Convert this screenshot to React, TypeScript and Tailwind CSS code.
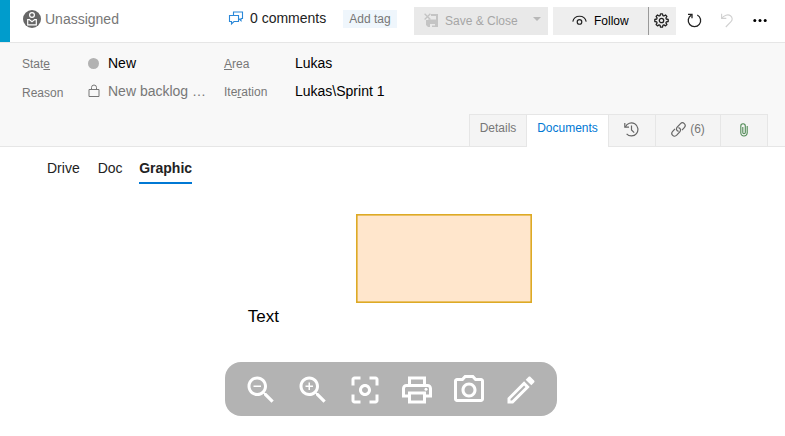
import type { ReactNode } from "react";

function PersonIcon() {
  return (
    <svg className="h-[18px] w-[18px] shrink-0" viewBox="0 0 18 18" fill="none">
      <circle cx="9" cy="9" r="9" fill="#666" />
      <circle cx="9" cy="5" r="2.4" stroke="#fff" strokeWidth="1.2" />
      <path d="M4.7 9.6h1.6L9 11.7l2.7-2.1h1.6v5.2H4.7z" stroke="#fff" strokeWidth="1.2" />
    </svg>
  );
}

function CommentsIcon() {
  return (
    <svg className="h-[15px] w-[16px] shrink-0" viewBox="0 0 16 15" fill="none" stroke="#2b88d8" strokeWidth="1.1">
      <path d="M5.500 4V1h9v6.500H13v2.300l-2.200-2.100" />
      <path d="M1.500 4.500h9v6H6l-2.500 2.400v-2.400h-2z" />
    </svg>
  );
}

function SaveCloseIcon() {
  return (
    <svg className="h-[15px] w-[15px] shrink-0" viewBox="0 0 15 15" fill="none">
      <path d="M7 1h7v13H4l-2-2V7h2v1h8V3H7z" fill="#c4c4c4" />
      <path d="M12 8H4V6.500h8z" fill="#c4c4c4" />
      <path d="M6 11h5v1.500H8V14H6z" fill="#e9e9e9" />
      <path d="M.6.7l5.800 5.800M6.400.7L.6 6.500" stroke="#c4c4c4" strokeWidth="1.300" />
    </svg>
  );
}

function EyeIcon() {
  return (
    <svg className="h-[11px] w-[15px] shrink-0" viewBox="0 0 15 11" fill="none" stroke="#222" strokeWidth="1.15">
      <path d="M.8 6.600C1.500 3.300 4.200 1.200 7.500 1.200s6 2.100 6.700 5.400" />
      <circle cx="7.500" cy="6.900" r="2.300" />
    </svg>
  );
}

function GearIcon() {
  return (
    <svg className="h-[15px] w-[15px]" viewBox="0 0 15 15" fill="none" stroke="#222" strokeWidth="1.3" strokeLinejoin="round">
      <path d="M6.500.8h2l.4 1.800 1 .4 1.600-1 1.400 1.400-1 1.600.4 1 1.900.5v2l-1.900.4-.4 1 1 1.600-1.400 1.400-1.600-1-1 .4-.4 1.900h-2l-.4-1.900-1-.4-1.600 1-1.400-1.400 1-1.600-.4-1-1.900-.4v-2L2.700 6l.4-1-1-1.600L3.500 2l1.600 1 1-.4z" />
      <circle cx="7.500" cy="7.500" r="2.200" />
    </svg>
  );
}

function RefreshIcon() {
  return (
    <svg className="h-[15px] w-[15px]" viewBox="0 0 15 15" fill="none" stroke="#222" strokeWidth="1.300">
      <path d="M10.300 2A6.200 6.200 0 1 1 4.400 2.100" />
      <path d="M1 1.300h4v4" />
    </svg>
  );
}

function UndoIcon() {
  return (
    <svg className="h-[15px] w-[14px]" viewBox="0 0 14 15" fill="none" stroke="#d0d0d0" strokeWidth="1.1">
      <path d="M1.600.8v4.600h4.700" />
      <path d="M1.800 5.200C4 2.300 8 .9 10.500 2.800c2.100 1.600 2.200 4.100.5 5.900L5.800 14" />
    </svg>
  );
}

function LockIcon() {
  return (
    <svg className="h-[14px] w-[12px] shrink-0" viewBox="0 0 12 14" fill="none" stroke="#777">
      <path d="M1 5.500h10v7H1z" />
      <path d="M3.500 5.500V3.500a2.500 2.500 0 0 1 5 0v2" />
    </svg>
  );
}

function HistoryIcon() {
  return (
    <svg className="h-[15px] w-[15px]" viewBox="0 0 15 15" fill="none" stroke="#666" strokeWidth="1.2">
      <path d="M1.400 5A6.500 6.500 0 1 1 2.600 11.800" />
      <path d="M.8 1v4.200h4.200M7.500 3.500v4.500l2.700 2.600" />
    </svg>
  );
}

function LinkIcon() {
  return (
    <svg className="h-[15px] w-[15px] shrink-0" viewBox="0 0 15 15" fill="none" stroke="#666" strokeWidth="1.2">
      <path d="M7.600 9.400C5.500 8.900 4.800 6.800 6.200 5.200l3.100-3.400c1.200-1.200 2.900-1.300 4-.2 1.200 1.200 1.100 2.900 0 4.100L11 8.200" />
      <path d="M7.400 5.600c2.100.5 2.800 2.600 1.400 4.200L5.700 13.200c-1.200 1.200-2.900 1.300-4 .2-1.200-1.200-1.100-2.900 0-4.100L4 6.800" />
    </svg>
  );
}

function ClipIcon() {
  return (
    <svg className="h-[14px] w-[8px]" viewBox="0 0 8 14" fill="none" strokeWidth="1.1">
      <path d="M7.200 3v6.800a3.200 3.200 0 0 1-6.400 0V3A2.200 2.200 0 0 1 5.300 3v6.500a1.200 1.200 0 0 1-2.500 0V4" stroke="#4f8a54" />
    </svg>
  );
}

function Tool({ children }: { children: ReactNode }) {
  return (
    <svg className="h-9 w-9" viewBox="0 0 24 24" fill="#fff">
      {children}
    </svg>
  );
}

const lens =
  "M15.500 14h-.79l-.28-.27C15.410 12.590 16 11.110 16 9.500 16 5.910 13.090 3 9.500 3S3 5.910 3 9.500 5.910 16 9.500 16c1.610 0 3.090-.59 4.230-1.570l.27.28v.79l5 4.990L20.490 19l-4.990-5zm-6 0C7.010 14 5 11.990 5 9.500S7.010 5 9.500 5 14 7.010 14 9.500 11.990 14 9.500 14z";

export default function App() {
  return (
    <div className="flex h-[436px] w-[785px] flex-col overflow-hidden bg-white font-['Liberation_Sans',Arial,sans-serif] text-sm text-[#222]">
      <header className="flex h-[43px] shrink-0 border-b border-[#e6e6e6]">
        <div className="h-[42px] w-2.5 bg-[#009ccc]" />
        <div className="ml-[13px] flex h-[38px] w-[205px] items-center gap-1 text-[#777]">
          <PersonIcon />
          <span>Unassigned</span>
        </div>
        <div className="flex h-9 w-[115px] items-center gap-[6px]">
          <CommentsIcon />
          <span>0 comments</span>
        </div>
        <div className="mt-2.5 flex h-[18px] w-[54px] items-center justify-center bg-[#eff6fc] text-xs text-[#777]">Add tag</div>
        <button className="mt-[7px] ml-[17px] flex h-7 w-[134px] items-center bg-[#e9e9e9] pl-[10px] text-xs text-[#a6a6a6]">
          <span className="mb-0.5"><SaveCloseIcon /></span>
          <span className="ml-1.5">Save &amp; Close</span>
          <svg className="mb-1 ml-[15px] h-1 w-2" viewBox="0 0 8 4" fill="#b8b8b8"><path d="M0 0h8L4 4z" /></svg>
        </button>
        <div className="mt-[7px] ml-[5px] flex h-7 bg-[#eee] text-xs text-black">
          <button className="flex w-24 items-center gap-[7px] border-r border-[#999] pl-[19px]">
            <span className="mb-px"><EyeIcon /></span>
            <span>Follow</span>
          </button>
          <button className="flex w-[27px] items-center justify-center pr-0.5 pb-px"><GearIcon /></button>
        </div>
        <div className="mt-[7px] ml-[11px] flex h-7 items-center">
          <div className="mb-px"><RefreshIcon /></div>
          <div className="mb-0.5 ml-[18px]"><UndoIcon /></div>
          <svg className="mb-0.5 ml-[19px] h-[3px] w-[14px]" viewBox="0 0 14 3"><circle cx="1.800" cy="1.500" r="1.500" /><circle cx="7" cy="1.500" r="1.500" /><circle cx="12.200" cy="1.500" r="1.500" /></svg>
        </div>
      </header>

      <section className="flex h-[104px] shrink-0 flex-col border-b border-[#e6e6e6] bg-[#f8f8f8]">
        <div className="grid h-[71px] grid-cols-[66px_136px_71px_auto] grid-rows-[28px_28px] pt-1.5 pl-[22px] leading-[28px] text-black">
          <span className="pt-px text-xs leading-[28px] text-[#777]">Stat<u className="underline-offset-1">e</u></span>
          <span className="flex items-center">
            <i className="mr-[9px] h-[11px] w-[11px] rounded-full bg-[#b2b2b2]" />
            New
          </span>
          <span className="pt-px text-xs leading-[28px] text-[#777]"><u className="underline-offset-1">A</u>rea</span>
          <span>Lukas</span>
          <span className="pt-0.5 text-xs leading-[28px] text-[#777]">Reason</span>
          <span className="flex h-7 items-center gap-2 text-[#777]">
            <LockIcon />
            <span>New backlog …</span>
          </span>
          <span className="pt-px text-xs leading-[28px] text-[#777]">Ite<u className="underline-offset-1">r</u>ation</span>
          <span>Lukas\Sprint 1</span>
        </div>
        <nav className="-mb-px ml-[469px] flex h-[33px] w-[299px] shrink-0 border-t border-l border-[#e6e6e6] bg-[#f4f4f4] text-xs text-[#777]">
          <div className="flex w-[57px] justify-center border-r border-b border-[#e6e6e6] pt-[5px]">Details</div>
          <div className="flex w-[82px] justify-center border-r border-[#e6e6e6] bg-white pt-[5px] text-[#0078d4]">Documents</div>
          <div className="flex w-[47px] justify-center border-r border-b border-[#e6e6e6] pt-[7px] pr-px"><HistoryIcon /></div>
          <div className="flex w-[65px] justify-center gap-1 border-r border-b border-[#e6e6e6] pt-1.5"><span className="pt-px"><LinkIcon /></span>(6)</div>
          <div className="flex w-[47px] justify-center border-r border-b border-[#e6e6e6] pt-2"><ClipIcon /></div>
        </nav>
      </section>

      <nav className="flex h-[37px] shrink-0 pl-[47px] leading-[42px]">
        <span>Drive</span>
        <span className="ml-[18px]">Doc</span>
        <span className="ml-[16.600px] border-b-2 border-[#0078d4] font-bold">Graphic</span>
      </nav>

      <main className="flex flex-1 flex-col">
        <svg className="h-[146px] w-[785px] shrink-0" viewBox="0 184 785 146">
          <rect x="356.800" y="214.800" width="174.400" height="87.400" fill="#ffe6cc" stroke="#d79b00" strokeOpacity=".85" strokeWidth="1.600" />
          <text x="247.700" y="322" fontSize="17" fill="#000">Text</text>
        </svg>
        <div className="mt-8 ml-[225px] flex h-[54px] w-[332px] items-center justify-center gap-4 rounded-2xl bg-[#b3b3b3] pt-0.5">
          <Tool><path d={lens} /><path d="M7 9h5v1H7z" /></Tool>
          <Tool><path d={lens} /><path d="M12 10h-2v2H9v-2H7V9h2V7h1v2h2v1z" /></Tool>
          <Tool>
            <path d="M12 8c-2.210 0-4 1.790-4 4s1.790 4 4 4 4-1.790 4-4-1.790-4-4-4zm0 6c-1.100 0-2-.9-2-2s.9-2 2-2 2 .9 2 2-.9 2-2 2zM5 15H3v4c0 1.100.9 2 2 2h4v-2H5v-4zM5 5h4V3H5c-1.100 0-2 .9-2 2v4h2V5zM19 3h-4v2h4v4h2V5c0-1.100-.9-2-2-2zM19 19h-4v2h4c1.100 0 2-.9 2-2v-4h-2v4z" />
          </Tool>
          <Tool>
            <path d="M19 8h-1V3H6v5H5c-1.660 0-3 1.340-3 3v6h4v4h12v-4h4v-6c0-1.660-1.340-3-3-3zM8 5h8v3H8V5zm8 12v2H8v-4h8v2zm2-2v-2H6v2H4v-4c0-.55.45-1 1-1h14c.55 0 1 .45 1 1v4h-2z" />
            <circle cx="18" cy="11.500" r="1" />
          </Tool>
          <Tool>
            <path d="M14.120 4l1.830 2H20v12H4V6h4.050l1.830-2h4.240M15 2H9L7.170 4H4c-1.100 0-2 .9-2 2v12c0 1.100.9 2 2 2h16c1.100 0 2-.9 2-2V6c0-1.100-.9-2-2-2h-3.170L15 2zm-3 7c1.650 0 3 1.350 3 3s-1.350 3-3 3-3-1.350-3-3 1.350-3 3-3m0-2c-2.760 0-5 2.240-5 5s2.240 5 5 5 5-2.240 5-5-2.240-5-5-5z" />
          </Tool>
          <Tool>
            <path d="M14.060 9.020l.92.920L5.920 19H5v-.92l9.060-9.060M17.660 3c-.25 0-.51.100-.7.290l-1.830 1.830 3.750 3.750 1.830-1.830c.39-.39.39-1.020 0-1.410l-2.340-2.340c-.2-.2-.45-.29-.71-.29zm-3.600 3.190L3 17.250V21h3.750L17.810 9.940l-3.750-3.750z" />
          </Tool>
        </div>
      </main>
    </div>
  );
}
